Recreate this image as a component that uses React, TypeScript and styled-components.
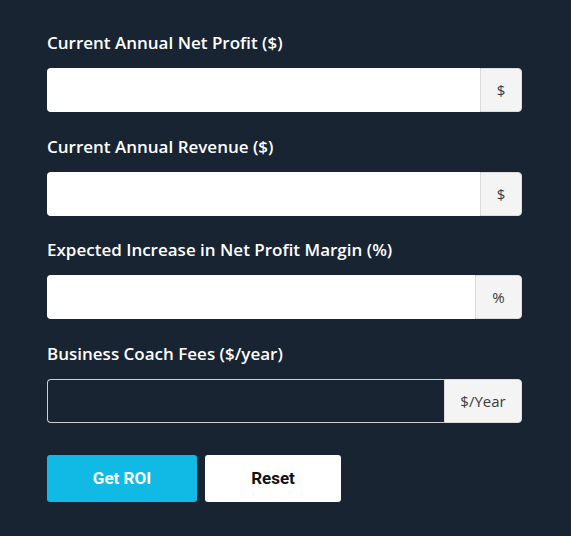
import React from "react";
import styled, { createGlobalStyle } from "styled-components";

const Global = createGlobalStyle`
  html, body { margin: 0; padding: 0; background: #182432; }
  * { box-sizing: border-box; }
`;

const Page = styled.div`
  width: 571px;
  min-height: 536px;
  background: #182432;
  padding: 31px 49px 0 47px;
  display: flex;
  flex-direction: column;
`;

const Field = styled.div`
  display: flex;
  flex-direction: column;
  margin-bottom: 22.7px;
`;

const Label = styled.label`
  font-family: "Open Sans", "Noto Sans", sans-serif;
  font-weight: 600;
  font-size: 17px;
  line-height: 24px;
  color: #ffffff;
  margin-bottom: 13px;
`;

const Group = styled.div`
  display: flex;
  height: 44px;
`;

const Input = styled.input<{ $dark?: boolean }>`
  flex: 1;
  min-width: 0;
  height: 44px;
  border: 1px solid ${(p) => (p.$dark ? "#cfcfcf" : "#ffffff")};
  border-right: none;
  border-radius: 4px 0 0 4px;
  background: ${(p) => (p.$dark ? "transparent" : "#ffffff")};
  outline: none;
  font-family: "Open Sans", sans-serif;
  font-size: 15px;
  padding: 0 12px;
`;

const Addon = styled.span<{ $w: number }>`
  width: ${(p) => p.$w}px;
  flex: none;
  display: flex;
  align-items: center;
  justify-content: center;
  background: #f4f4f4;
  border: 1px solid #dcdcdc;
  border-radius: 0 4px 4px 0;
  font-family: "Open Sans", "Noto Sans", sans-serif;
  font-size: 15px;
  color: #3a3a3a;
`;

const Buttons = styled.div`
  display: flex;
  gap: 8px;
  margin-top: 9px;
`;

const Button = styled.button<{ $primary?: boolean; $w: number }>`
  width: ${(p) => p.$w}px;
  height: 47px;
  border: none;
  border-radius: 3px;
  background: ${(p) => (p.$primary ? "#10bae5" : "#ffffff")};
  color: ${(p) => (p.$primary ? "#ffffff" : "#111111")};
  font-family: Roboto, "Liberation Sans", sans-serif;
  font-weight: 700;
  font-size: 17px;
  cursor: pointer;
`;

const fields = [
  { label: "Current Annual Net Profit ($)", addon: "$", w: 42 },
  { label: "Current Annual Revenue ($)", addon: "$", w: 42 },
  { label: "Expected Increase in Net Profit Margin (%)", addon: "%", w: 47 },
  { label: "Business Coach Fees ($/year)", addon: "$/Year", w: 78, dark: true },
];

export default function App() {
  return (
    <>
      <Global />
      <Page>
        {fields.map((f) => (
          <Field key={f.label}>
            <Label>{f.label}</Label>
            <Group>
              <Input $dark={f.dark} />
              <Addon $w={f.w}>{f.addon}</Addon>
            </Group>
          </Field>
        ))}
        <Buttons>
          <Button $primary $w={150}>Get ROI</Button>
          <Button $w={136}>Reset</Button>
        </Buttons>
      </Page>
    </>
  );
}
